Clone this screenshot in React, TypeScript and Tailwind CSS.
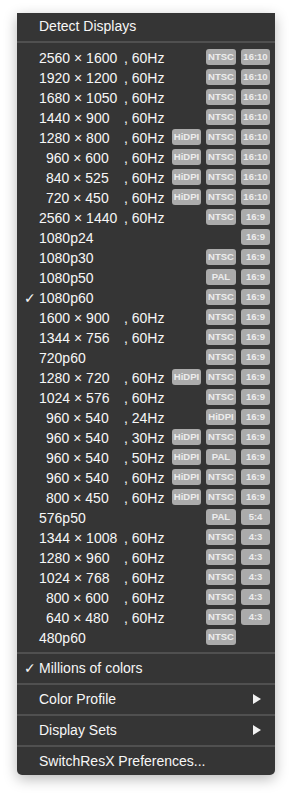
type Row = {
  res: string;
  hz?: string;
  indent?: boolean;
  checked?: boolean;
  badges: (string | null)[];
};

const rows: Row[] = [
  { res: "2560 × 1600", hz: "60Hz", badges: [null, "NTSC", "16:10"] },
  { res: "1920 × 1200", hz: "60Hz", badges: [null, "NTSC", "16:10"] },
  { res: "1680 × 1050", hz: "60Hz", badges: [null, "NTSC", "16:10"] },
  { res: "1440 × 900", hz: "60Hz", badges: [null, "NTSC", "16:10"] },
  { res: "1280 × 800", hz: "60Hz", badges: ["HiDPI", "NTSC", "16:10"] },
  { res: "960 × 600", hz: "60Hz", indent: true, badges: ["HiDPI", "NTSC", "16:10"] },
  { res: "840 × 525", hz: "60Hz", indent: true, badges: ["HiDPI", "NTSC", "16:10"] },
  { res: "720 × 450", hz: "60Hz", indent: true, badges: ["HiDPI", "NTSC", "16:10"] },
  { res: "2560 × 1440", hz: "60Hz", badges: [null, "NTSC", "16:9"] },
  { res: "1080p24", badges: [null, null, "16:9"] },
  { res: "1080p30", badges: [null, "NTSC", "16:9"] },
  { res: "1080p50", badges: [null, "PAL", "16:9"] },
  { res: "1080p60", checked: true, badges: [null, "NTSC", "16:9"] },
  { res: "1600 × 900", hz: "60Hz", badges: [null, "NTSC", "16:9"] },
  { res: "1344 × 756", hz: "60Hz", badges: [null, "NTSC", "16:9"] },
  { res: "720p60", badges: [null, "NTSC", "16:9"] },
  { res: "1280 × 720", hz: "60Hz", badges: ["HiDPI", "NTSC", "16:9"] },
  { res: "1024 × 576", hz: "60Hz", badges: [null, "NTSC", "16:9"] },
  { res: "960 × 540", hz: "24Hz", indent: true, badges: [null, "HiDPI", "16:9"] },
  { res: "960 × 540", hz: "30Hz", indent: true, badges: ["HiDPI", "NTSC", "16:9"] },
  { res: "960 × 540", hz: "50Hz", indent: true, badges: ["HiDPI", "PAL", "16:9"] },
  { res: "960 × 540", hz: "60Hz", indent: true, badges: ["HiDPI", "NTSC", "16:9"] },
  { res: "800 × 450", hz: "60Hz", indent: true, badges: ["HiDPI", "NTSC", "16:9"] },
  { res: "576p50", badges: [null, "PAL", "5:4"] },
  { res: "1344 × 1008", hz: "60Hz", badges: [null, "NTSC", "4:3"] },
  { res: "1280 × 960", hz: "60Hz", badges: [null, "NTSC", "4:3"] },
  { res: "1024 × 768", hz: "60Hz", badges: [null, "NTSC", "4:3"] },
  { res: "800 × 600", hz: "60Hz", indent: true, badges: [null, "NTSC", "4:3"] },
  { res: "640 × 480", hz: "60Hz", indent: true, badges: [null, "NTSC", "4:3"] },
  { res: "480p60", badges: [null, "NTSC", null] },
];

const slotWidths = ["w-[29px]", "w-[30px]", "w-[29px]"];

function Badge({ label, width }: { label: string | null; width: string }) {
  if (!label) return <div className={width} />;
  return (
    <div
      className={`${width} h-[16px] mb-[2px] rounded-[3px] bg-[#ababab] text-[#ededed] text-[9.5px] font-bold leading-[16px] text-center`}
    >
      {label}
    </div>
  );
}

function Separator({ top = 4, bottom = 3 }: { top?: number; bottom?: number }) {
  return (
    <div style={{ paddingTop: top, paddingBottom: bottom }}>
      <div className="h-[2px] bg-[#505050]" />
    </div>
  );
}

function Check() {
  return <span className="absolute left-[7px] text-[14px] font-bold font-['DejaVu_Sans',sans-serif]">✓</span>;
}

function Arrow() {
  return (
    <svg width="10" height="12" viewBox="0 0 10 12" className="mr-[13px]">
      <polygon points="1,1 9,6 1,11" fill="#f2f2f2" />
    </svg>
  );
}

export default function App() {
  return (
    <div className="min-h-[797px] bg-white pt-[13px] pl-[17px] font-['Liberation_Sans',Arial,sans-serif]">
      <div className="w-[258px] bg-[#353535] text-[#f7f7f7] text-[14px] rounded-b-[5px] shadow-[0_4px_14px_rgba(0,0,0,0.28)] pb-[3px]">
        <div className="h-[26px] flex items-center pl-[22px]">Detect Displays</div>
        <Separator top={2} bottom={5} />

        {rows.map((r, i) => (
          <div key={i} className="relative h-[20px] flex items-center pr-[5px]">
            {r.checked && <Check />}
            <div className="flex-1 flex pl-[22px] whitespace-pre">
              {r.hz ? (
                <>
                  <span className={`w-[85px] ${r.indent ? "pl-[7px]" : ""}`}>{r.res}</span>
                  <span>, {r.hz}</span>
                </>
              ) : (
                <span>{r.res}</span>
              )}
            </div>
            <div className="flex gap-[5px]">
              {r.badges.map((b, j) => (
                <Badge key={j} label={b} width={slotWidths[j]} />
              ))}
            </div>
          </div>
        ))}

        <Separator />
        <div className="relative h-[22px] flex items-center pl-[22px]">
          <Check />
          Millions of colors
        </div>
        <Separator />
        <div className="h-[22px] flex items-center justify-between pl-[22px]">
          <span>Color Profile</span>
          <Arrow />
        </div>
        <Separator />
        <div className="h-[22px] flex items-center justify-between pl-[22px]">
          <span>Display Sets</span>
          <Arrow />
        </div>
        <Separator />
        <div className="h-[22px] flex items-center pl-[22px]">SwitchResX Preferences...</div>
      </div>
    </div>
  );
}
